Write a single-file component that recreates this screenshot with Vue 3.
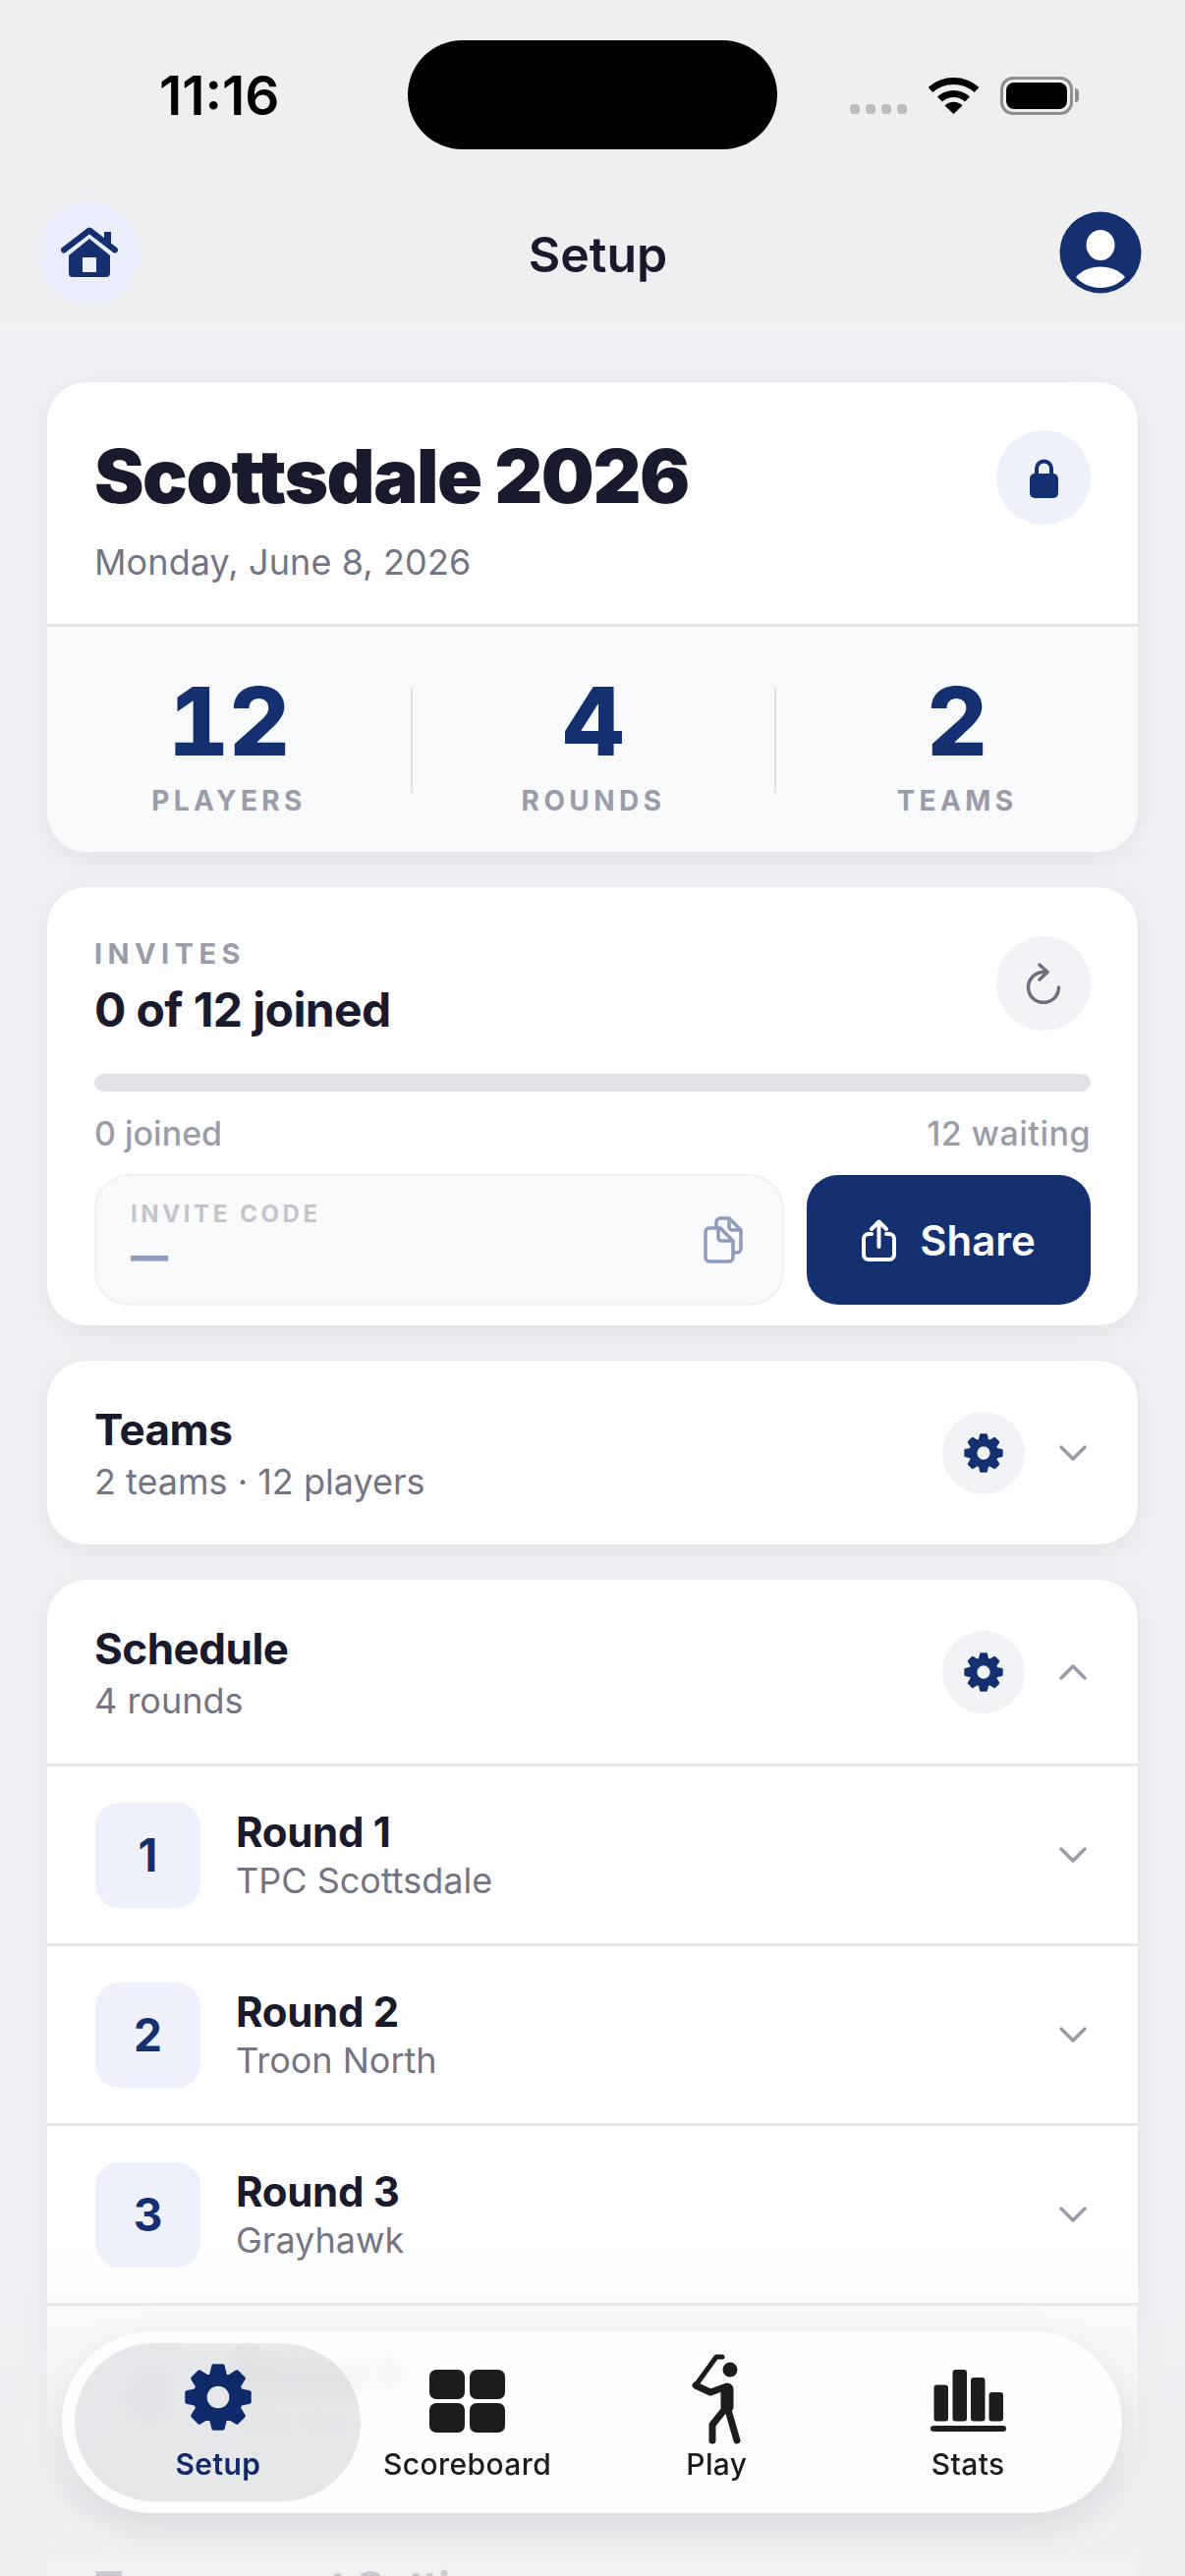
<template>
  <div class="phone">
    <header class="top">
      <div class="status">
        <span class="time">11:16</span>
        <div class="island"></div>
        <div class="status-icons">
          <div class="dots"><i></i><i></i><i></i><i></i></div>
          <svg class="wifi" width="51" height="38" viewBox="0 0 51 38">
            <path d="M2 13.5C15 1.500 36 1.500 49 13.500" fill="none" stroke="#000" stroke-width="7" />
            <path d="M11.500 23C19 15.500 32 15.500 39.500 23" fill="none" stroke="#000" stroke-width="7" />
            <path d="M25.500 38L16.500 29.500C21 24.500 30 24.500 34.500 29.500z" fill="#000" />
          </svg>
          <div class="battery"><div class="battery-fill"></div></div>
        </div>
      </div>
      <div class="nav">
        <button class="home">
          <svg width="58" height="52" viewBox="0 0 58 52">
            <rect x="44" y="5" width="7" height="14" fill="#153070" />
            <path d="M3 23.500L29 3.500L55 23.500" fill="none" stroke="#153070" stroke-width="6" stroke-linecap="round" stroke-linejoin="round" />
            <path d="M29 12L50 29V47a4 4 0 0 1-4 4H12a4 4 0 0 1-4-4V29zM22 31V46H36V31z" fill="#153070" fill-rule="evenodd" />
          </svg>
        </button>
        <h1>Setup</h1>
        <svg class="avatar" width="84" height="84" viewBox="0 0 84 84">
          <circle cx="42" cy="42" r="41.500" fill="#153070" />
          <ellipse cx="42" cy="34.500" rx="14.500" ry="15.500" fill="#fff" />
          <path d="M17 67C23 60 32 56.500 42 56.500S61 60 67 67C61 74 52 78 42 78S23 74 17 67z" fill="#fff" />
        </svg>
      </div>
    </header>

    <main class="content">
      <section class="card">
        <div class="trip">
          <div>
            <h2>Scottsdale 2026</h2>
            <p class="date">Monday, June 8, 2026</p>
          </div>
          <button class="round-btn lock">
            <svg width="29" height="41" viewBox="0 0 29 41">
              <path d="M7 18V11a7.500 7.500 0 0 1 15 0V18" fill="none" stroke="#153070" stroke-width="4" />
              <rect y="16" width="29" height="25" rx="5" fill="#153070" />
            </svg>
          </button>
        </div>
        <div class="stats">
          <div v-for="s in stats" :key="s.label" class="stat">
            <strong>{{ s.value }}</strong>
            <span>{{ s.label }}</span>
          </div>
        </div>
      </section>

      <section class="card invites">
        <div class="invites-head">
          <div>
            <div class="eyebrow">INVITES</div>
            <div class="joined">0 of 12 joined</div>
          </div>
          <button class="round-btn refresh">
            <svg width="36" height="42" viewBox="0 0 36 42" fill="none" stroke="#6e6f7c" stroke-width="3.500" stroke-linecap="round" stroke-linejoin="round">
              <path d="M18 9.500A15.500 15.500 0 1 0 33.500 25" />
              <path d="M14 2L22 9.500L14 17" />
            </svg>
          </button>
        </div>
        <div class="progress"></div>
        <div class="counts"><span>0 joined</span><span>12 waiting</span></div>
        <div class="invite-actions">
          <div class="code-box">
            <div>
              <div class="code-label">INVITE CODE</div>
              <div class="code-value">—</div>
            </div>
            <svg width="40" height="48" viewBox="0 0 40 48" fill="none" stroke="#8e9bbd" stroke-width="3.500" stroke-linejoin="round">
              <path d="M6 12H17L30 25V42a4 4 0 0 1-4 4H6a4 4 0 0 1-4-4V16a4 4 0 0 1 4-4z" />
              <path d="M15 12V22a3 3 0 0 0 3 3H30" />
              <path d="M13 12V6a4 4 0 0 1 4-4h9L38 14V33a4 4 0 0 1-4 4H30" />
              <path d="M26 2V11a3 3 0 0 0 3 3H38" />
            </svg>
          </div>
          <button class="share">
            <svg width="35" height="43" viewBox="0 0 35 43" fill="none" stroke="#fff" stroke-width="4" stroke-linecap="round" stroke-linejoin="round">
              <path d="M10 15H7a5 5 0 0 0-5 5V36a5 5 0 0 0 5 5H28a5 5 0 0 0 5-5V20a5 5 0 0 0-5-5H25" />
              <path d="M17.500 28V3M10 10L17.500 2.500L25 10" />
            </svg>
            Share
          </button>
        </div>
      </section>

      <section class="card">
        <div class="section-head">
          <div>
            <h3>Teams</h3>
            <p>2 teams · 12 players</p>
          </div>
          <button class="round-btn gear-btn">
            <svg width="42" height="42" viewBox="-38 -38 76 76"><path :d="gearPath" fill="#153070" stroke="#153070" stroke-width="4" stroke-linejoin="round" fill-rule="evenodd" /></svg>
          </button>
          <svg class="chev" width="30" height="18" viewBox="0 0 30 18"><path d="M3 3L15 15L27 3" /></svg>
        </div>
      </section>

      <section class="card">
        <div class="section-head bordered">
          <div>
            <h3>Schedule</h3>
            <p>4 rounds</p>
          </div>
          <button class="round-btn gear-btn">
            <svg width="42" height="42" viewBox="-38 -38 76 76"><path :d="gearPath" fill="#153070" stroke="#153070" stroke-width="4" stroke-linejoin="round" fill-rule="evenodd" /></svg>
          </button>
          <svg class="chev" width="30" height="18" viewBox="0 0 30 18"><path d="M3 15L15 3L27 15" /></svg>
        </div>
        <div v-for="r in rounds" :key="r.num" class="round-row">
          <div class="badge">{{ r.num }}</div>
          <div class="round-text">
            <div class="round-name">Round {{ r.num }}</div>
            <div class="round-course">{{ r.course }}</div>
          </div>
          <svg class="chev" width="30" height="18" viewBox="0 0 30 18"><path d="M3 3L15 15L27 3" /></svg>
        </div>
      </section>

      <section class="card">
        <div class="section-head last">
          <h3>Tournament Settings</h3>
        </div>
      </section>
    </main>

    <div class="fade"></div>

    <nav class="tabbar">
      <div v-for="t in tabs" :key="t.name" class="tab" :class="{ active: t.name === 'Setup' }">
        <svg v-if="t.name === 'Setup'" width="72" height="72" viewBox="-38 -38 76 76"><path :d="gearPath" fill="#0f2a6b" stroke="#0f2a6b" stroke-width="4" stroke-linejoin="round" fill-rule="evenodd" /></svg>
        <svg v-else-if="t.name === 'Scoreboard'" width="77" height="64" viewBox="0 0 77 64" fill="#1c1c1e">
          <rect width="36" height="30" rx="7" />
          <rect x="41" width="36" height="30" rx="7" />
          <rect y="34" width="36" height="30" rx="7" />
          <rect x="41" y="34" width="36" height="30" rx="7" />
        </svg>
        <svg v-else-if="t.name === 'Play'" class="golfer" width="50" height="92" viewBox="0 0 50 92">
          <circle cx="39" cy="16" r="7.500" fill="#1c1c1e" />
          <path d="M31 3H25L4 32" fill="none" stroke="#1c1c1e" stroke-width="5" stroke-linecap="round" stroke-linejoin="round" />
          <path d="M4 32L19 39L33 34" fill="none" stroke="#1c1c1e" stroke-width="7" stroke-linecap="round" stroke-linejoin="round" />
          <path d="M36 36V54" fill="none" stroke="#1c1c1e" stroke-width="13" stroke-linecap="round" />
          <path d="M33 57L21 72V88M37 57L46 88" fill="none" stroke="#1c1c1e" stroke-width="7" stroke-linecap="round" stroke-linejoin="round" />
        </svg>
        <svg v-else width="77" height="64" viewBox="0 0 77 64" fill="#1c1c1e">
          <rect x="3.500" y="15.500" width="14.500" height="37" rx="3" />
          <rect x="22.500" width="14.500" height="52.500" rx="3" />
          <rect x="41" y="8" width="14.500" height="44.500" rx="3" />
          <rect x="59.500" y="23" width="14.500" height="29.500" rx="3" />
          <rect y="57" width="77" height="6" rx="3" />
        </svg>
        <span>{{ t.name }}</span>
      </div>
    </nav>
  </div>
</template>

<script setup>
const stats = [
  { value: 12, label: "PLAYERS" },
  { value: 4, label: "ROUNDS" },
  { value: 2, label: "TEAMS" },
];

const rounds = [
  { num: 1, course: "TPC Scottsdale" },
  { num: 2, course: "Troon North" },
  { num: 3, course: "Grayhawk" },
  { num: 4, course: "We-Ko-Pa" },
];

const tabs = [{ name: "Setup" }, { name: "Scoreboard" }, { name: "Play" }, { name: "Stats" }];

// 8 teeth with a round hole, same shape in the cards and the tab bar
function makeGear() {
  let d = "";
  for (let i = 0; i < 8; i++) {
    const a = (i * Math.PI) / 4 - Math.PI / 2;
    const pts = [
      [25, a - 0.3],
      [34, a - 0.15],
      [34, a + 0.15],
      [25, a + 0.3],
    ];
    for (const [r, t] of pts) {
      d += (d ? "L" : "M") + (r * Math.cos(t)).toFixed(2) + " " + (r * Math.sin(t)).toFixed(2);
    }
  }
  d += "zM14 0A14 14 0 1 0 -14 0A14 14 0 1 0 14 0z";
  return d;
}
const gearPath = makeGear();
</script>

<style>
html, body {
  margin: 0;
  background: #f0f1f4;
}
</style>

<style scoped>
.phone {
  position: relative;
  width: 1206px;
  height: 2622px;
  overflow: hidden;
  background: #f0f1f4;
  font-family: Inter, "Noto Sans", sans-serif;
  color: #1a1a2e;
}
button {
  border: none;
  padding: 0;
  font-family: inherit;
}
h1, h2, h3, p {
  margin: 0;
}

.top {
  background: #eeeff1;
  border-bottom: 2px solid #f1f2f4;
}
.status {
  position: relative;
  height: 186px;
  padding: 8px 114px 0 162px;
  box-sizing: border-box;
  display: flex;
  align-items: center;
  justify-content: space-between;
}
.time {
  font-size: 55px;
  font-weight: 600;
  color: #000;
}
.island {
  position: absolute;
  left: 415px;
  top: 41px;
  width: 376px;
  height: 111px;
  border-radius: 56px;
  background: #000;
}
.status-icons {
  display: flex;
  align-items: center;
}
.dots {
  display: flex;
  gap: 6px;
  margin: 28px 22px 0 0;
}
.dots i {
  width: 10px;
  height: 10px;
  border-radius: 4px;
  background: #bcbcbc;
}
.wifi {
  margin-right: 22px;
}
.battery {
  position: relative;
  width: 74px;
  height: 39px;
  box-sizing: border-box;
  border: 3px solid #8e8e8e;
  border-radius: 13px;
  padding: 3px;
}
.battery::after {
  content: "";
  position: absolute;
  right: -9px;
  top: 9px;
  width: 4px;
  height: 14px;
  border-radius: 0 4px 4px 0;
  background: #8e8e8e;
}
.battery-fill {
  height: 100%;
  border-radius: 8px;
  background: #000;
}

.nav {
  height: 142px;
  padding: 0 44px 0 38px;
  display: flex;
  align-items: center;
  justify-content: space-between;
}
.nav h1 {
  font-size: 50px;
  font-weight: 600;
  color: #1a1a2e;
  margin: 3px 4px 0 0;
}
.home {
  width: 105px;
  height: 105px;
  border-radius: 50%;
  background: #e9eefa;
  display: flex;
  align-items: center;
  justify-content: center;
}

.content {
  padding: 59px 48px 0;
  display: flex;
  flex-direction: column;
  gap: 36px;
}
.card {
  background: #fff;
  border-radius: 40px;
  overflow: hidden;
  box-shadow: 0 6px 30px rgba(20, 25, 50, 0.07);
  flex-shrink: 0;
}
.round-btn {
  width: 96px;
  height: 96px;
  border-radius: 50%;
  display: flex;
  align-items: center;
  justify-content: center;
  flex-shrink: 0;
}
.lock {
  background: #eef1fa;
}
.refresh {
  background: #f2f3f6;
}

.trip {
  height: 249px;
  padding: 49px 48px 0;
  box-sizing: border-box;
  display: flex;
  justify-content: space-between;
  align-items: flex-start;
  border-bottom: 3px solid #e6e7ec;
}
.trip h2 {
  font-size: 76px;
  line-height: 92px;
  font-weight: 900;
  letter-spacing: -1.500px;
  color: #1a1a2e;
}
.date {
  margin-top: 19px;
  font-size: 36px;
  line-height: 46px;
  color: #737484;
  letter-spacing: 0.1px;
}
.stats {
  height: 229px;
  background: #f9fafc;
  display: grid;
  grid-template-columns: repeat(3, 1fr);
  padding: 61px 0 0;
  box-sizing: border-box;
}
.stat {
  height: 108px;
  text-align: center;
  position: relative;
  display: flex;
  flex-direction: column;
  align-items: center;
}
.stat + .stat {
  border-left: 2px solid #e2e3e8;
}
.stat strong {
  margin-top: -3px;
  font-size: 96px;
  line-height: 76px;
  font-weight: 800;
  font-variant-numeric: tabular-nums;
  color: #153070;
}
.stat span {
  margin-top: 26px;
  font-size: 28px;
  line-height: 34px;
  font-weight: 700;
  letter-spacing: 4.400px;
  color: #9b9ca9;
}

.invites {
  height: 446px;
  padding: 50px 48px 0;
  box-sizing: border-box;
}
.invites-head {
  display: flex;
  justify-content: space-between;
  align-items: flex-start;
  height: 140px;
}
.eyebrow {
  font-size: 29px;
  line-height: 36px;
  font-weight: 700;
  letter-spacing: 5.400px;
  color: #9b9ca9;
}
.joined {
  margin-top: 10px;
  font-size: 48px;
  line-height: 58px;
  font-weight: 700;
  letter-spacing: -0.6px;
}
.progress {
  height: 18px;
  border-radius: 9px;
  background: #e2e3e8;
}
.counts {
  display: flex;
  justify-content: space-between;
  margin-top: 22px;
  font-size: 34px;
  line-height: 42px;
  font-weight: 500;
  color: #9b9ca9;
}
.counts span:last-child {
  letter-spacing: 0.5px;
}
.invite-actions {
  display: flex;
  gap: 23px;
  margin-top: 20px;
}
.code-box {
  flex: 1;
  height: 134px;
  box-sizing: border-box;
  border: 2px solid #f0f1f4;
  border-radius: 36px;
  background: #f9fafc;
  padding: 24px 40px 0 35px;
  display: flex;
  justify-content: space-between;
  align-items: flex-start;
}
.code-box svg {
  margin-top: 17px;
}
.code-label {
  font-size: 24px;
  line-height: 30px;
  font-weight: 700;
  letter-spacing: 3.600px;
  color: #c4c5cc;
}
.code-value {
  margin-top: 5px;
  font-size: 38px;
  line-height: 44px;
  font-weight: 900;
  color: #8e9bbd;
}
.share {
  width: 289px;
  height: 132px;
  margin-top: 1px;
  border-radius: 32px;
  background: #153070;
  color: #fff;
  font-size: 42px;
  font-weight: 600;
  display: flex;
  align-items: center;
  justify-content: center;
  gap: 24px;
}

.section-head {
  height: 187px;
  padding: 0 51px 0 48px;
  box-sizing: border-box;
  display: flex;
  align-items: center;
}
.section-head.bordered {
  height: 190px;
  border-bottom: 3px solid #e6e7ec;
}
.section-head.last {
  align-items: flex-start;
  padding-top: 40px;
}
.section-head > div {
  flex: 1;
}
.section-head h3 {
  font-size: 44px;
  line-height: 54px;
  font-weight: 700;
  letter-spacing: -0.5px;
}
.section-head p {
  margin-top: 4px;
  font-size: 36px;
  line-height: 44px;
  color: #737484;
}
.gear-btn {
  width: 84px;
  height: 84px;
  background: #f2f3f6;
  margin-right: 34px;
}
.chev {
  flex-shrink: 0;
}
.chev path {
  fill: none;
  stroke: #9a9ba8;
  stroke-width: 3.500;
  stroke-linecap: round;
  stroke-linejoin: round;
}

.round-row {
  height: 183px;
  padding: 0 51px 0 49px;
  box-sizing: border-box;
  display: flex;
  align-items: center;
  gap: 36px;
  border-bottom: 3px solid #e6e7ec;
}
.round-row:last-child {
  border-bottom: none;
}
.badge {
  width: 107px;
  height: 107px;
  border-radius: 24px;
  background: #eef1fb;
  color: #153070;
  font-size: 46px;
  font-weight: 700;
  display: flex;
  align-items: center;
  justify-content: center;
}
.round-text {
  flex: 1;
}
.round-name {
  font-size: 42px;
  line-height: 52px;
  font-weight: 700;
  letter-spacing: -0.3px;
}
.round-course {
  font-size: 36px;
  line-height: 46px;
  color: #737484;
}

.fade {
  position: absolute;
  left: 0;
  right: 0;
  bottom: 0;
  height: 340px;
  background: linear-gradient(
    to bottom,
    rgba(238, 239, 241, 0),
    rgba(238, 239, 241, 0.72) 50%,
    rgba(238, 239, 241, 0.95) 78%,
    rgba(238, 239, 241, 0.95) 92%,
    rgba(238, 239, 241, 0.82)
  );
  pointer-events: none;
}
.tabbar {
  position: absolute;
  left: 63px;
  top: 2373px;
  width: 1079px;
  height: 185px;
  box-sizing: border-box;
  padding: 12px 32px;
  border-radius: 93px;
  background: rgba(255, 255, 255, 0.82);
  backdrop-filter: blur(10px);
  box-shadow: 0 12px 40px rgba(20, 25, 50, 0.1);
  display: grid;
  grid-template-columns: repeat(4, 1fr);
}
.tab {
  position: relative;
  height: 161px;
  display: flex;
  flex-direction: column;
  align-items: center;
  justify-content: flex-end;
  padding-bottom: 20px;
  box-sizing: border-box;
  color: #1c1c1e;
  font-size: 30px;
  font-weight: 500;
}
.tab.active {
  color: #0f2a6b;
  font-weight: 600;
}
.tab.active::before {
  content: "";
  position: absolute;
  left: -19px;
  right: -18px;
  top: 0;
  bottom: 0;
  border-radius: 81px;
  background: rgba(120, 122, 135, 0.17);
}
.tab:last-child {
  left: 2px;
}
.tab svg {
  position: relative;
  margin-bottom: 14px;
}
.tab span {
  position: relative;
  line-height: 36px;
  letter-spacing: 0.4px;
}
.tab .golfer {
  margin-bottom: 2px;
}
</style>
